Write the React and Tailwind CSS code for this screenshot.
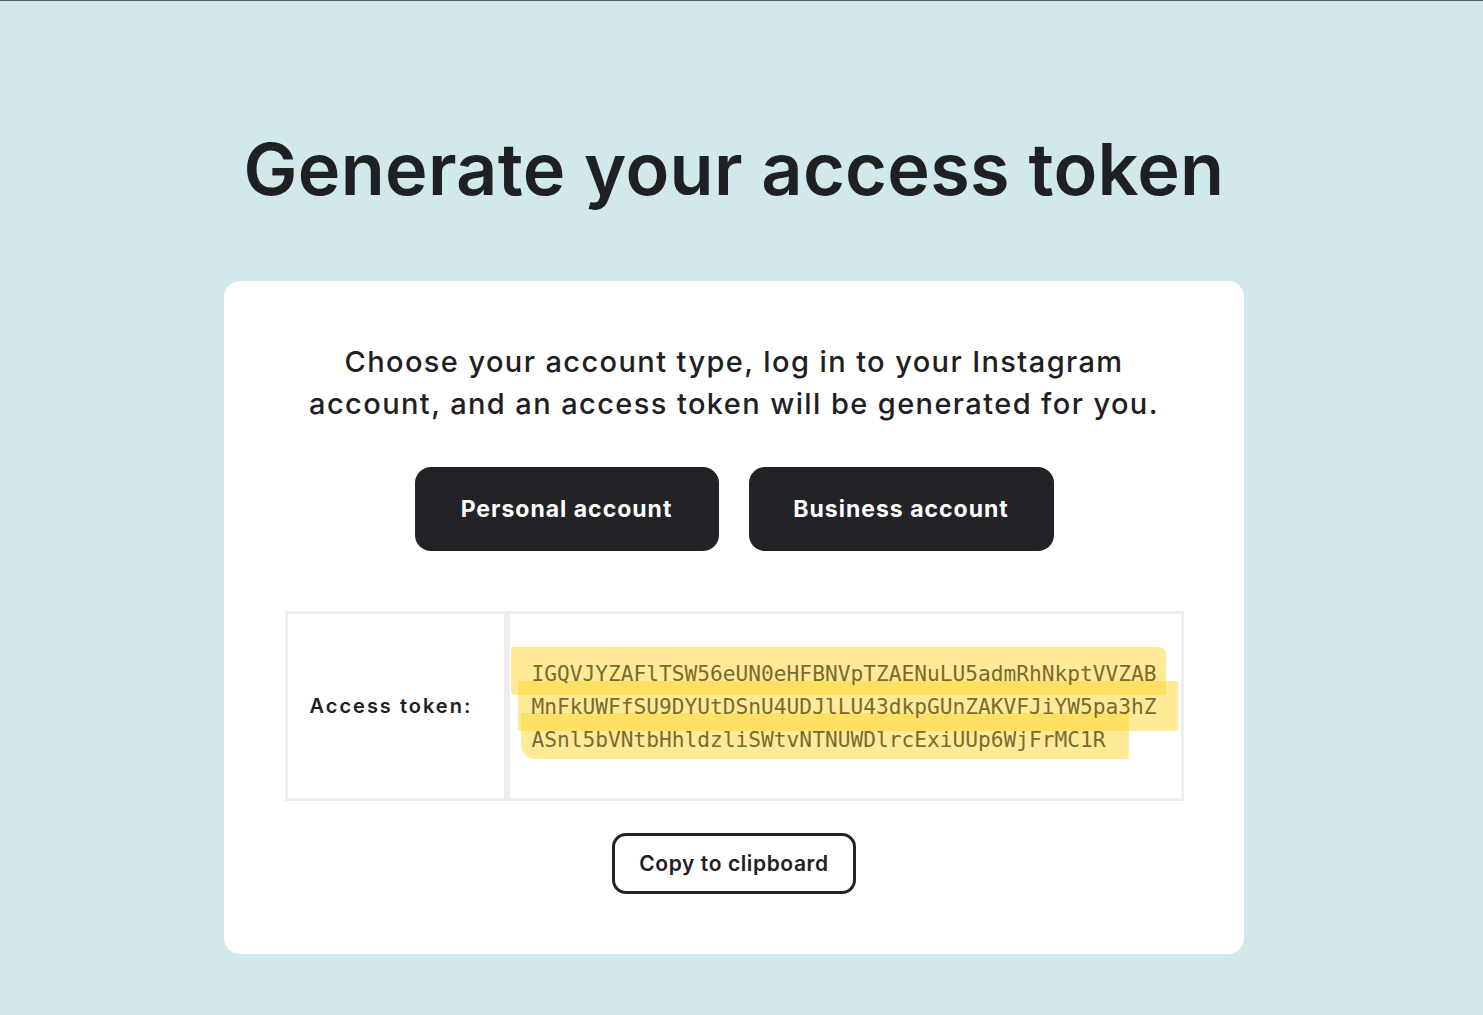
import React from 'react';

const token = 'IGQVJYZAFlTSW56eUN0eHFBNVpTZAENuLU5admRhNkptVVZABMnFkUWFfSU9DYUtDSnU4UDJlLU43dkpGUnZAKVFJiYW5pa3hZASnl5bVNtbHhldzliSWtvNTNUWDlrcExiUUp6WjFrMC1R';

const App = () => {
  return (
    <div className="min-h-screen w-full bg-[#d2e9ec] border-t border-[#5c5c5c] font-['Inter',sans-serif] text-[#1f2023]">
      <div className="w-[1468px] flex flex-col items-center pt-[124px] pb-[61px]">
        {/* heading */}
        <h1 className="text-[72px] leading-[88px] font-semibold tracking-[0.3px] text-[#1f2023]">
          Generate your access token
        </h1>

        <div className="mt-[68px] w-[1020px] rounded-[16px] bg-white flex flex-col items-center pt-[60px] pb-[60px]">
          <p className="w-[880px] text-center text-[29px] leading-[42px] font-medium tracking-[1.4px]">
            Choose your account type, log in to your Instagram account, and an access token will be generated for you.
          </p>

          <div className="mt-[42px] flex gap-[30px]">
            <button className="w-[304px] h-[84px] rounded-[16px] bg-[#222327] text-white text-[23px] font-bold tracking-[1px]">
              Personal account
            </button>
            <button className="w-[305px] h-[84px] rounded-[16px] bg-[#222327] text-white text-[23px] font-bold tracking-[1px]">
              Business account
            </button>
          </div>

          <div className="mt-[60px] w-[899px] h-[190px] flex border-[3px] border-[#eeeeee]">
            <div className="w-[222px] flex items-center pl-[22px] border-r-[6px] border-[#eeeeee]">
              <span className="text-[20px] font-semibold tracking-[2px]">Access token:</span>
            </div>
            <div className="flex-1 flex items-center pl-[22px]">
              <div className="relative">
                {/* marker strokes */}
                <div className="absolute left-[-21px] top-[-10px] w-[655px] h-[48px] bg-[#fdd530]/50 rounded-tr-[8px] rounded-bl-[4px]" />
                <div className="absolute left-[-14px] top-[24px] w-[660px] h-[50px] bg-[#fdd530]/50 rounded-br-[4px]" />
                <div className="absolute left-[-11px] top-[56px] w-[608px] h-[46px] bg-[#fdd530]/50 rounded-bl-[14px]" />
                <p className="relative w-[636px] break-all font-['DejaVu_Sans_Mono',monospace] text-[21.2px] leading-[33px] text-[#7b6a2e]">
                  {token}
                </p>
              </div>
            </div>
          </div>

          <button className="mt-[32px] w-[244px] h-[61px] rounded-[14px] border-[3px] border-[#222327] bg-white text-[21px] font-semibold tracking-[0.6px]">
            Copy to clipboard
          </button>
        </div>
      </div>
    </div>
  );
};

export default App;
